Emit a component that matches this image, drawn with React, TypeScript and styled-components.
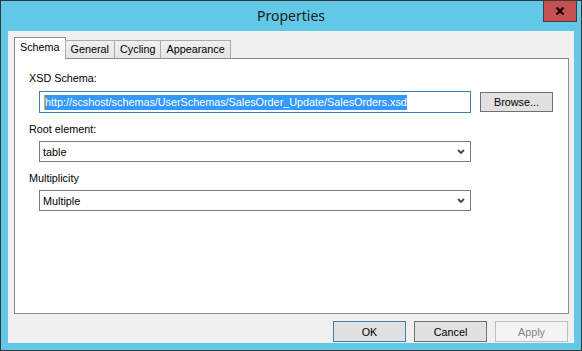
import React from 'react';
import styled, { createGlobalStyle } from 'styled-components';

const GlobalStyle = createGlobalStyle`
  html, body {
    margin: 0;
    padding: 0;
    background: #ffffff;
  }
  body {
    font-family: "Liberation Sans", Arial, sans-serif;
    font-size: 10.8px;
    color: #000;
  }
  * {
    box-sizing: border-box;
  }
`;

const Window = styled.div`
  width: 582px;
  height: 351px;
  border: 1px solid #353535;
  background: #62c8e8;
  display: flex;
  flex-direction: column;
`;

const TitleBar = styled.div`
  height: 30px;
  display: grid;
  grid-template-columns: 1fr auto 1fr;
  align-items: start;
`;

const Title = styled.div`
  grid-column: 2;
  font-family: "Noto Sans", "Open Sans", sans-serif;
  font-size: 14px;
  line-height: 30px;
  color: #1b1b1b;
`;

const CloseButton = styled.div`
  grid-column: 3;
  justify-self: end;
  width: 34px;
  height: 22px;
  margin-top: -1px;
  margin-right: 4px;
  background: #c75050;
  border: 1px solid #3d3d3d;
  display: flex;
  align-items: center;
  justify-content: center;
`;

const Body = styled.div`
  flex: 1;
  margin: 0 7px 7px;
  background: #f0f0f0;
  padding: 6px 5px 0 6px;
  display: flex;
  flex-direction: column;
`;

const TabStrip = styled.div`
  height: 21px;
  display: flex;
  align-items: flex-end;
  position: relative;
  z-index: 1;
`;

const Tab = styled.div<{ $active?: boolean }>`
  height: ${(p) => (p.$active ? '22px' : '18px')};
  margin-bottom: ${(p) => (p.$active ? '-1px' : '0')};
  margin-left: ${(p) => (p.$active ? '0' : '-1px')};
  padding: ${(p) => (p.$active ? '3px 5px 0' : '2px 5px 0')};
  border: 1px solid ${(p) => (p.$active ? '#898c95' : '#acacac')};
  border-bottom: none;
  background: ${(p) => (p.$active ? '#ffffff' : 'linear-gradient(#f0f0f0, #e5e5e5)')};
  line-height: 13px;
  white-space: nowrap;
  &:first-child {
    margin-left: 0;
  }
`;

const Panel = styled.div`
  height: 256px;
  border: 1px solid #898c95;
  background: #ffffff;
  padding: 13px 0 0 14px;
  display: flex;
  flex-direction: column;
`;

const Label = styled.div<{ $gap?: number }>`
  line-height: 13px;
  margin-top: ${(p) => p.$gap ?? 0}px;
`;

const FieldRow = styled.div`
  display: flex;
  align-items: center;
  margin: 6px 0 0 10px;
`;

const TextBox = styled.div`
  width: 432px;
  height: 22px;
  border: 1px solid #3c7fb1;
  background: #fff;
  padding-left: 4px;
  display: flex;
  align-items: center;
  white-space: nowrap;
  overflow: hidden;
`;

const Selected = styled.span`
  background: #3399ff;
  color: #fff;
  line-height: 15px;
  border-left: 1px solid #f0a040;
`;

const Select = styled.div`
  width: 432px;
  height: 21px;
  margin: 5px 0 0 10px;
  border: 1px solid #7a7a7a;
  background: #fff;
  padding: 0 5px 0 3px;
  display: flex;
  align-items: center;
  justify-content: space-between;
`;

const Button = styled.div<{ $variant?: 'default' | 'disabled' }>`
  width: 73px;
  height: 21px;
  border: 1px solid
    ${(p) => (p.$variant === 'default' ? '#3c7fb1' : p.$variant === 'disabled' ? '#bfbfbf' : '#707070')};
  background: ${(p) => (p.$variant === 'disabled' ? '#f4f4f4' : '#e1e1e1')};
  color: ${(p) => (p.$variant === 'disabled' ? '#838383' : '#000')};
  display: flex;
  align-items: center;
  justify-content: center;
`;

const BrowseButton = styled(Button)`
  height: 20px;
  margin-left: 9px;
`;

const Footer = styled.div`
  display: flex;
  justify-content: flex-end;
  gap: 8px;
  margin-top: 7px;
  padding-right: 1px;
`;

const Chevron = () => (
  <svg width="8" height="6" viewBox="0 0 8 6">
    <polyline points="1,1 4,4 7,1" fill="none" stroke="#444" strokeWidth="1.8" />
  </svg>
);

const CloseGlyph = () => (
  <svg width="10" height="8" viewBox="0 0 10 8">
    <path d="M1.5 0.5 L8.5 7.5 M8.5 0.5 L1.5 7.5" stroke="#000" strokeWidth="2.2" />
  </svg>
);

const tabs = ['Schema', 'General', 'Cycling', 'Appearance'];

export default function App() {
  return (
    <>
      <GlobalStyle />
      <Window>
        <TitleBar>
          <Title>Properties</Title>
          <CloseButton>
            <CloseGlyph />
          </CloseButton>
        </TitleBar>
        <Body>
          <TabStrip>
            {tabs.map((t, i) => (
              <Tab key={t} $active={i === 0}>
                {t}
              </Tab>
            ))}
          </TabStrip>
          <Panel>
            <Label>XSD Schema:</Label>
            <FieldRow>
              <TextBox>
                <Selected>http://scshost/schemas/UserSchemas/SalesOrder_Update/SalesOrders.xsd</Selected>
              </TextBox>
              <BrowseButton>Browse...</BrowseButton>
            </FieldRow>
            <Label $gap={10}>Root element:</Label>
            <Select>
              <span>table</span>
              <Chevron />
            </Select>
            <Label $gap={10}>Multiplicity</Label>
            <Select>
              <span>Multiple</span>
              <Chevron />
            </Select>
          </Panel>
          <Footer>
            <Button $variant="default">OK</Button>
            <Button>Cancel</Button>
            <Button $variant="disabled">Apply</Button>
          </Footer>
        </Body>
      </Window>
    </>
  );
}
